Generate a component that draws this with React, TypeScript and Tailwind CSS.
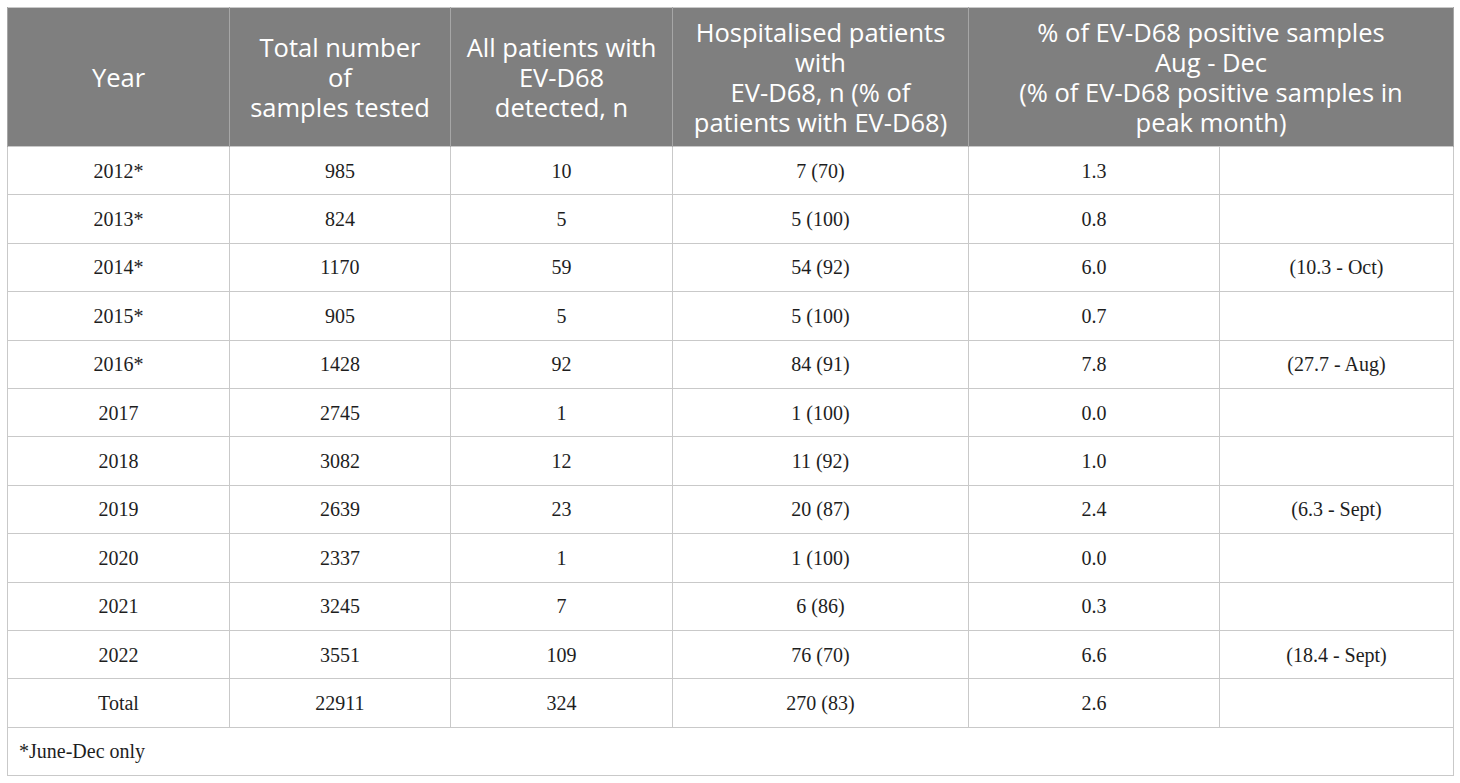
const rows: [string, string, string, string, string, string][] = [
  ["2012*", "985", "10", "7 (70)", "1.3", ""],
  ["2013*", "824", "5", "5 (100)", "0.8", ""],
  ["2014*", "1170", "59", "54 (92)", "6.0", "(10.3 - Oct)"],
  ["2015*", "905", "5", "5 (100)", "0.7", ""],
  ["2016*", "1428", "92", "84 (91)", "7.8", "(27.7 - Aug)"],
  ["2017", "2745", "1", "1 (100)", "0.0", ""],
  ["2018", "3082", "12", "11 (92)", "1.0", ""],
  ["2019", "2639", "23", "20 (87)", "2.4", "(6.3 - Sept)"],
  ["2020", "2337", "1", "1 (100)", "0.0", ""],
  ["2021", "3245", "7", "6 (86)", "0.3", ""],
  ["2022", "3551", "109", "76 (70)", "6.6", "(18.4 - Sept)"],
  ["Total", "22911", "324", "270 (83)", "2.6", ""],
];

const head = "border-x border-[#a6a6a6] px-2 text-center align-middle font-normal";
const cell = "h-[48.4px] border border-[#c9c9c9] px-2 text-center align-middle";

export default function App() {
  return (
    <div className="min-h-screen bg-white p-[7px]">
      <table className="w-[1446px] table-fixed border-collapse border border-[#c9c9c9] text-[#1e1e1e]">
        <colgroup>
          <col className="w-[222px]" />
          <col className="w-[221px]" />
          <col className="w-[222px]" />
          <col className="w-[296px]" />
          <col className="w-[251px]" />
          <col className="w-[234px]" />
        </colgroup>
        <thead>
          <tr className="h-[139px] bg-[#7f7f7f] font-['Open_Sans',sans-serif] text-[25.5px] leading-[30px] text-white">
            <th className={head}>Year</th>
            <th className={head}>
              Total number
              <br />
              of
              <br />
              samples tested
            </th>
            <th className={head}>
              All patients with
              <br />
              EV-D68
              <br />
              detected, n
            </th>
            <th className={head}>
              Hospitalised patients
              <br />
              with
              <br />
              EV-D68, n (% of
              <br />
              patients with EV-D68)
            </th>
            <th className={head} colSpan={2}>
              % of EV-D68 positive samples
              <br />
              Aug - Dec
              <br />
              (% of EV-D68 positive samples in
              <br />
              peak month)
            </th>
          </tr>
        </thead>
        <tbody className="font-['Liberation_Serif',serif] text-[20px]">
          {rows.map((r) => (
            <tr key={r[0]}>
              {r.map((v, i) => (
                <td key={i} className={cell}>
                  {v}
                </td>
              ))}
            </tr>
          ))}
          <tr>
            <td colSpan={6} className="h-[48.4px] border border-[#c9c9c9] px-[11px] text-left align-middle">
              *June-Dec only
            </td>
          </tr>
        </tbody>
      </table>
    </div>
  );
}
